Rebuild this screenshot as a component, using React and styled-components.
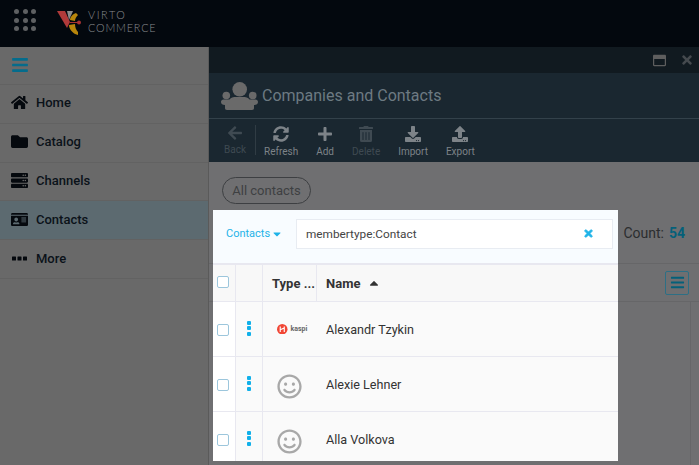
import React from 'react';
import styled, { createGlobalStyle } from 'styled-components';
import {
  FaArrowLeft, FaBars, FaCaretDown, FaDownload, FaFolder, FaHome,
  FaIdCard, FaPlus, FaRegSmile, FaServer, FaSyncAlt, FaTimes, FaTrashAlt, FaUpload,
  FaRegWindowMaximize, FaCaretUp
} from 'react-icons/fa';

const menu = [
  { label: 'Home', icon: <FaHome /> },
  { label: 'Catalog', icon: <FaFolder /> },
  { label: 'Channels', icon: <FaServer /> },
  { label: 'Contacts', icon: <FaIdCard />, active: true },
  { label: 'More', icon: <MoreIcon /> }
];

const tools = [
  { label: 'Back', icon: <FaArrowLeft />, off: true },
  { label: 'Refresh', icon: <FaSyncAlt /> },
  { label: 'Add', icon: <FaPlus /> },
  { label: 'Delete', icon: <FaTrashAlt />, off: true },
  { label: 'Import', icon: <FaDownload /> },
  { label: 'Export', icon: <FaUpload /> }
];

const contacts = [
  { name: 'Alexandr Tzykin', kaspi: true },
  { name: 'Alexie Lehner' },
  { name: 'Alla Volkova' }
];

export default function App () {
  return (
    <Page>
      <GlobalStyle />
      <TopBar>
        <Dots>
          {Array.from({ length: 9 }).map((_, i) => <Dot key={i} />)}
        </Dots>
        <Logo />
        <LogoText>
          <LogoLine $spacing="1.6px">VIRTO</LogoLine>
          <LogoLine $spacing="0.85px">COMMERCE</LogoLine>
        </LogoText>
      </TopBar>
      <Main>
        <Sidebar>
          <Burger><FaBars /></Burger>
          {menu.map(item => (
            <MenuItem key={item.label} $active={item.active}>
              <MenuIcon>{item.icon}</MenuIcon>
              {item.label}
            </MenuItem>
          ))}
        </Sidebar>
        <Blade>
          <BladeBar>
            <FaRegWindowMaximize />
            <FaTimes />
          </BladeBar>
          <BladeHead>
            <PeopleIcon />
            <BladeTitle>Companies and Contacts</BladeTitle>
          </BladeHead>
          <Toolbar>
            {tools.map(tool => (
              <Tool key={tool.label} $off={tool.off}>
                <ToolIcon>{tool.icon}</ToolIcon>
                {tool.label}
              </Tool>
            ))}
          </Toolbar>
          <Content>
            <Pill>All contacts</Pill>
            <CountRow>Count: <b>54</b></CountRow>
            <DimHeader><ListButton><FaBars /></ListButton></DimHeader>
            <DimColumn />
            <Spotlight>
              <SearchBar>
                <Dropdown>Contacts<FaCaretDown /></Dropdown>
                <SearchBox>
                  membertype:Contact
                  <Clear><FaTimes /></Clear>
                </SearchBox>
              </SearchBar>
              <HeaderRow>
                <CheckCell $head><Check /></CheckCell>
                <MenuCell />
                <TypeCell $head>Type ...</TypeCell>
                <NameCell>Name <SortIcon><FaCaretUp /></SortIcon></NameCell>
              </HeaderRow>
              {contacts.map(contact => (
                <Row key={contact.name}>
                  <CheckCell><Check /></CheckCell>
                  <MenuCell><Kebab><i /><i /><i /></Kebab></MenuCell>
                  <TypeCell>
                    {contact.kaspi ? <Kaspi /> : <Smile><FaRegSmile /></Smile>}
                  </TypeCell>
                  <NameCell>{contact.name}</NameCell>
                </Row>
              ))}
            </Spotlight>
          </Content>
        </Blade>
      </Main>
    </Page>
  );
}

function MoreIcon () {
  return (
    <svg width="15" height="5" viewBox="0 0 15 5" fill="currentColor">
      <rect x="0" y="0.5" width="4" height="4" rx="0.5" />
      <rect x="5.5" y="0.5" width="4" height="4" rx="0.5" />
      <rect x="11" y="0.5" width="4" height="4" rx="0.5" />
    </svg>
  );
}

function PeopleIcon () {
  return (
    <svg width="37" height="28" viewBox="0 0 37 28" fill="#6a6a6a" style={{ flex: 'none' }}>
      <circle cx="18.7" cy="7.3" r="7.3" />
      <circle cx="5.3" cy="13.5" r="3.8" />
      <circle cx="31.7" cy="13.5" r="3.8" />
      <path d="M6 28c-1.5 0-2-1-2-2v-3c-2.5 0-4-1-4-3 0-1.5 1-2.5 2.5-2.5h6c1-1.5 3-2.5 5-2.5h10c2 0 4 1 5 2.5h6c1.5 0 2.5 1 2.5 2.5 0 2-1.5 3-4 3v3c0 1-.5 2-2 2z" />
    </svg>
  );
}

function Logo () {
  return (
    <svg width="24" height="26" viewBox="0 0 24 26" style={{ marginLeft: 21, flex: 'none' }}>
      <path d="M0 0h8l5 11-3 6z" fill="#b03a3a" />
      <path d="M10 0h6l-4 9z" fill="#8c8c8c" />
      <path d="M21 4l-2-2c-3 1-6 4-6 7l5 1c0-2 1-4 3-6z" fill="#b8860b" />
      <path d="M21 24l-3-1c-3-2-6-5-6-9l6-1c0 3 1 6 3 8z" fill="#b8860b" />
      <circle cx="22" cy="11.5" r="2" fill="#a83232" />
      <path d="M13 11.5h8" stroke="#a83232" strokeWidth="1" />
    </svg>
  );
}

function Kaspi () {
  return (
    <KaspiMark>
      <svg width="10.5" height="10.5" viewBox="0 0 13 13">
        <circle cx="6.5" cy="6.5" r="6.5" fill="#f14635" />
        <path d="M4 3v7M9 3v7M4 7l5-2" stroke="#fff" strokeWidth="1.4" fill="none" />
      </svg>
      kaspi
    </KaspiMark>
  );
}

const GlobalStyle = createGlobalStyle`
  html, body {
    margin: 0;
    padding: 0;
    overflow: hidden;
    background: #6f6f71;
    font-family: Roboto, "Liberation Sans", sans-serif;
  }
`;

const Page = styled.div`
  width: 699px;
  height: 465px;
  display: flex;
  flex-direction: column;
  overflow: hidden;
`;

const TopBar = styled.div`
  height: 47px;
  flex: none;
  display: flex;
  align-items: center;
  padding-left: 14px;
  background: #03080e;
`;

const Dots = styled.div`
  display: grid;
  grid-template-columns: repeat(3, 5px);
  gap: 3.5px;
  margin-top: -7px;
`;

const Dot = styled.span`
  width: 5px;
  height: 5px;
  border-radius: 50%;
  background: #5e6062;
`;

const LogoText = styled.div`
  margin-left: 7px;
  margin-top: -6px;
  font-family: Lato, sans-serif;
  font-weight: 300;
  font-size: 10.8px;
  line-height: 13px;
  color: #8a8c8e;
`;

const LogoLine = styled.div`
  letter-spacing: ${props => props.$spacing};
`;

const Main = styled.div`
  flex: 1;
  display: flex;
  min-height: 0;
`;

const Sidebar = styled.div`
  width: 209px;
  flex: none;
  background: #696969;
  border-right: 1px solid #5a5a5a;
  box-sizing: border-box;
`;

const Burger = styled.div`
  height: 38px;
  box-sizing: border-box;
  display: flex;
  align-items: center;
  padding: 0 0 2px 11px;
  border-bottom: 1px solid #626262;
  font-size: 18px;
  color: #056c8c;
`;

const MenuItem = styled.div`
  height: 38.8px;
  box-sizing: border-box;
  display: flex;
  align-items: center;
  padding-bottom: 2px;
  font-size: 13px;
  font-weight: 500;
  color: #0b1219;
  border-bottom: 1px solid #626262;
  background: ${props => props.$active ? '#5c6a70' : 'transparent'};
`;

const MenuIcon = styled.span`
  width: 36px;
  display: flex;
  justify-content: center;
  padding-left: 2px;
  box-sizing: border-box;
  font-size: 17px;
  color: #05090e;
`;

const Blade = styled.div`
  flex: 1;
  display: flex;
  flex-direction: column;
  min-width: 0;
`;

const BladeBar = styled.div`
  height: 26px;
  flex: none;
  display: flex;
  align-items: center;
  justify-content: flex-end;
  gap: 14px;
  padding-right: 5px;
  background: #111a20;
  font-size: 13px;
  color: #5e5e5e;

  svg:last-child {
    font-size: 14px;
    color: #454a4e;
  }
`;

const BladeHead = styled.div`
  height: 46px;
  box-sizing: border-box;
  flex: none;
  display: flex;
  align-items: center;
  padding-left: 12px;
  background: #1a2730;
  border-bottom: 1px solid #33414a;
`;

const BladeTitle = styled.div`
  margin-left: 4px;
  font-size: 16px;
  color: #6d7a82;
`;

const Toolbar = styled.div`
  height: 43px;
  flex: none;
  display: flex;
  gap: 18px;
  background: #1a2730;
  padding-left: 15px;
  box-sizing: border-box;
`;

const Tool = styled.div`
  padding: 6px 0 0;
  display: flex;
  flex-direction: column;
  align-items: center;
  font-size: 10px;
  color: ${props => props.$off ? '#3f4a52' : '#7d8388'};

  &:first-child {
    margin-right: -10px;
    margin-top: 6px;
    padding: 0 9px 0 0;
    height: 30px;
    border-right: 1px solid #303c44;
  }
`;

const ToolIcon = styled.span`
  height: 18px;
  display: flex;
  align-items: center;
  margin-bottom: 3px;
  font-size: 16px;
`;

const Content = styled.div`
  flex: 1;
  position: relative;
  padding: 15px 0 0 13px;
  background: #6f6f71;
  min-height: 0;
`;

const Pill = styled.div`
  width: 89px;
  height: 27px;
  box-sizing: border-box;
  display: flex;
  align-items: center;
  justify-content: center;
  border: 1px solid #3d3f42;
  border-radius: 14px;
  font-size: 13px;
  color: #3e4042;
`;

const CountRow = styled.div`
  height: 22px;
  margin-top: 18px;
  padding-right: 14px;
  display: flex;
  justify-content: flex-end;
  align-items: center;
  gap: 5px;
  font-size: 14px;
  color: #2b2d2f;

  b {
    color: #04607a;
    font-weight: 700;
  }
`;

const DimHeader = styled.div`
  margin: 19px 0 0 -13px;
  height: 39px;
  box-sizing: border-box;
  border-top: 1px solid #666668;
  border-bottom: 1px solid #666668;
  display: flex;
  justify-content: flex-end;
  align-items: center;
  padding-right: 10px;
`;

const DimColumn = styled.div`
  height: 163px;
  margin-right: 8px;
  border-right: 1px solid #666668;
`;

const ListButton = styled.div`
  width: 24px;
  height: 24px;
  box-sizing: border-box;
  display: flex;
  align-items: center;
  justify-content: center;
  border: 1px solid #2d6f85;
  border-radius: 2px;
  font-size: 15px;
  color: #04607a;
`;

const Spotlight = styled.div`
  position: absolute;
  left: 4px;
  top: 48px;
  width: 405px;
  height: 251px;
  overflow: hidden;
  background: #fff;
`;

const SearchBar = styled.div`
  height: 53px;
  box-sizing: border-box;
  display: flex;
  align-items: center;
  padding: 0 5px 6px 13px;
  background: #f8fcff;
`;

const Dropdown = styled.div`
  width: 70px;
  flex: none;
  display: flex;
  align-items: center;
  gap: 1px;
  font-size: 11px;
  color: #1fb3e8;

  svg {
    font-size: 12px;
  }
`;

const SearchBox = styled.div`
  flex: 1;
  height: 30px;
  box-sizing: border-box;
  display: flex;
  align-items: center;
  justify-content: space-between;
  padding: 0 18px 0 9px;
  background: #fff;
  border: 1px solid #e8ecf2;
  font-size: 11.8px;
  color: #444;
`;

const Clear = styled.span`
  display: flex;
  font-size: 11px;
  color: #1fb3e8;

  svg {
    stroke: currentColor;
    stroke-width: 40px;
  }
`;

const HeaderRow = styled.div`
  display: grid;
  grid-template-columns: 23px 27px 54px 1fr;
  height: 39px;
  box-sizing: border-box;
  background: #f8f8f8;
  border-top: 2px solid #e8e8f0;
  border-bottom: 1px solid #e8e8f0;
  font-size: 13px;
  font-weight: 700;
  color: #333;
`;

const Row = styled.div`
  display: grid;
  grid-template-columns: 23px 27px 54px 1fr;
  height: 55px;
  box-sizing: border-box;
  background: #fafafa;
  border-bottom: 1px solid #e8e8f0;
  font-size: 12.6px;
  color: #333;
`;

const CheckCell = styled.div`
  display: flex;
  align-items: center;
  padding: ${props => props.$head ? '0 0 3px 4px' : '2px 0 0 4px'};
  background: ${props => props.$head ? '#f8f8f8' : '#fff'};
  border-right: 1px solid #e8e8f0;
`;

const Check = styled.span`
  width: 12px;
  height: 12px;
  box-sizing: border-box;
  border: 1px solid #9cc6dc;
  border-radius: 2px;
  background: #fff;
`;

const MenuCell = styled.div`
  display: flex;
  align-items: center;
  justify-content: center;
  padding-bottom: 2px;
  border-right: 1px solid #e8e8f0;
`;

const Kebab = styled.span`
  display: flex;
  flex-direction: column;
  gap: 1.5px;

  i {
    width: 4.5px;
    height: 4px;
    border-radius: 1px;
    background: #10b0ea;
  }
`;

const TypeCell = styled.div`
  display: flex;
  align-items: center;
  padding-left: 9px;
  white-space: nowrap;
  border-right: ${props => props.$head ? '1px solid #e8e8f0' : 'none'};
`;

const NameCell = styled.div`
  display: flex;
  align-items: center;
  padding-left: 9px;
  white-space: pre;
`;

const SortIcon = styled.span`
  display: flex;
  margin-left: 3px;
  font-size: 14px;
`;

const Smile = styled.span`
  display: flex;
  padding-left: 5px;
  margin-top: 5px;
  font-size: 25px;
  color: #a8a8a8;
`;

const KaspiMark = styled.span`
  display: flex;
  align-items: center;
  gap: 3px;
  margin-left: 5px;
  font-size: 7px;
  font-weight: 700;
  color: #666;
`;
